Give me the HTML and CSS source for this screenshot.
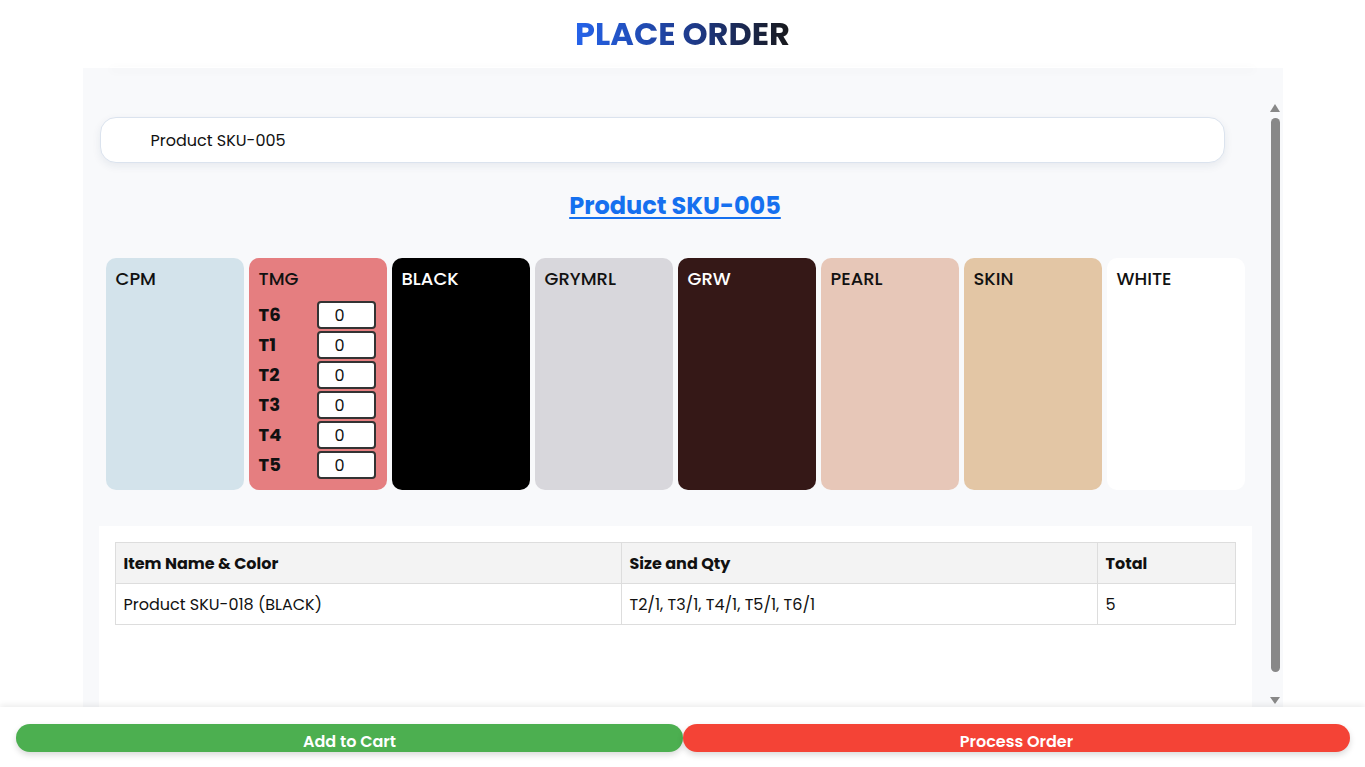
FILE: index.html
```html
<!DOCTYPE html>
<html lang="en">
<head>
  <meta charset="UTF-8">
  <meta name="viewport" content="width=device-width, initial-scale=1.0">
  <title>Place Order</title>
  <link rel="stylesheet" href="styles.css">
</head>
<body>
  <header class="page-header">
    <h1 class="page-title">PLACE ORDER</h1>
  </header>

  <main class="order-panel">
    <div class="order-scroll">
      <div class="search-box">
        <input class="search-input" type="text" value="Product SKU-005">
      </div>

      <div class="product-heading">
        <a href="#" class="product-link">Product SKU-005</a>
      </div>

      <div class="color-grid">
        <div class="color-card color-cpm">
          <div class="color-name">CPM</div>
        </div>

        <div class="color-card color-tmg">
          <div class="color-name">TMG</div>
          <div class="size-list">
            <label class="size-row"><span class="size-label">T6</span><input class="qty-input" type="text" value="0"></label>
            <label class="size-row"><span class="size-label">T1</span><input class="qty-input" type="text" value="0"></label>
            <label class="size-row"><span class="size-label">T2</span><input class="qty-input" type="text" value="0"></label>
            <label class="size-row"><span class="size-label">T3</span><input class="qty-input" type="text" value="0"></label>
            <label class="size-row"><span class="size-label">T4</span><input class="qty-input" type="text" value="0"></label>
            <label class="size-row"><span class="size-label">T5</span><input class="qty-input" type="text" value="0"></label>
          </div>
        </div>

        <div class="color-card color-black">
          <div class="color-name">BLACK</div>
        </div>
        <div class="color-card color-grymrl">
          <div class="color-name">GRYMRL</div>
        </div>
        <div class="color-card color-grw">
          <div class="color-name">GRW</div>
        </div>
        <div class="color-card color-pearl">
          <div class="color-name">PEARL</div>
        </div>
        <div class="color-card color-skin">
          <div class="color-name">SKIN</div>
        </div>
        <div class="color-card color-white">
          <div class="color-name">WHITE</div>
        </div>
      </div>

      <section class="cart-section">
        <table class="cart-table">
          <thead>
            <tr>
              <th class="col-name">Item Name &amp; Color</th>
              <th class="col-size">Size and Qty</th>
              <th class="col-total">Total</th>
            </tr>
          </thead>
          <tbody>
            <tr>
              <td>Product SKU-018 (BLACK)</td>
              <td>T2/1, T3/1, T4/1, T5/1, T6/1</td>
              <td>5</td>
            </tr>
          </tbody>
        </table>
      </section>
    </div>

    <div class="scroll-rail">
      <span class="rail-arrow rail-up"></span>
      <span class="rail-thumb"></span>
      <span class="rail-arrow rail-down"></span>
    </div>
  </main>

  <footer class="action-bar">
    <button class="btn btn-cart">Add to Cart</button>
    <button class="btn btn-process">Process Order</button>
  </footer>
</body>
</html>
```

FILE: styles.css
```css
:root {
  --panel-bg: #f8f9fb;
  --text-dark: #111111;
  --link-blue: #1570ef;
  --border: #dddddd;
  --green: #4caf50;
  --red: #f44336;
  --rail: #888888;
}

* {
  margin: 0;
  padding: 0;
  box-sizing: border-box;
}

body {
  font-family: Poppins, "Open Sans", "Noto Sans", sans-serif;
  color: var(--text-dark);
  background: #ffffff;
  height: 100vh;
  overflow: hidden;
}

.page-header {
  height: 68px;
  display: flex;
  align-items: center;
  justify-content: center;
  position: relative;
  z-index: 2;
}

.page-header::after {
  content: "";
  position: absolute;
  left: 110px;
  right: 110px;
  bottom: 0;
  height: 1px;
  box-shadow: 0 2px 8px rgba(0, 0, 0, 0.12);
}

.page-title {
  font-size: 32px;
  font-weight: 700;
  background: linear-gradient(90deg, #2563eb 0%, #1e3a8a 55%, #18181b 100%);
  -webkit-background-clip: text;
  background-clip: text;
  color: transparent;
}

.order-panel {
  width: 1200px;
  height: 639px;
  margin: 0 auto;
  background: var(--panel-bg);
  padding-top: 32px;
  display: flex;
}

.order-scroll {
  flex: 1;
  height: 100%;
  overflow: hidden;
  padding: 0 16px;
}

.scroll-rail {
  width: 15px;
  display: flex;
  flex-direction: column;
  align-items: center;
  padding: 4px 0 3px;
}

.rail-arrow {
  width: 0;
  height: 0;
  border-left: 5px solid transparent;
  border-right: 5px solid transparent;
}

.rail-up {
  border-bottom: 8px solid var(--rail);
}

.rail-down {
  margin-top: auto;
  border-top: 7px solid var(--rail);
}

.rail-thumb {
  width: 9px;
  height: 554px;
  margin-top: 6px;
  border-radius: 5px;
  background: var(--rail);
}

.search-box {
  padding-top: 17px;
  padding-left: 1px;
}

.search-input {
  width: 1125px;
  height: 46px;
  border: 1px solid #dbe3ee;
  border-radius: 16px;
  background: #ffffff;
  box-shadow: 0 3px 8px rgba(30, 50, 90, 0.08);
  padding-left: 50px;
  font-family: inherit;
  font-size: 16px;
  color: var(--text-dark);
  outline: none;
}

.product-heading {
  text-align: center;
  padding: 27px 0 36px;
}

.product-link {
  font-size: 24px;
  font-weight: 700;
  color: var(--link-blue);
  text-decoration: underline;
  text-underline-offset: 3px;
  line-height: 32px;
}

.color-grid {
  display: grid;
  grid-template-columns: repeat(8, 138px);
  gap: 5px;
  margin-left: 7px;
}

.color-card {
  height: 232px;
  border-radius: 10px;
  padding: 10px;
}

.color-name {
  font-size: 18px;
  font-weight: 500;
  line-height: 22px;
}

.color-cpm { background: #d3e3eb; }
.color-tmg { background: #e57e80; }
.color-black { background: #000000; color: #ffffff; }
.color-grymrl { background: #d8d7dc; }
.color-grw { background: #351817; color: #ffffff; }
.color-pearl { background: #e7c7b8; }
.color-skin { background: #e3c6a5; }
.color-white { background: #ffffff; }

.size-list {
  display: flex;
  flex-direction: column;
  gap: 2px;
  margin-top: 11px;
}

.size-row {
  display: grid;
  grid-template-columns: 58px 59px;
  align-items: center;
}

.size-label {
  font-size: 18px;
  font-weight: 700;
  line-height: 26px;
}

.qty-input {
  width: 59px;
  height: 28px;
  border: 2px solid #333333;
  border-radius: 4px;
  background: #ffffff;
  padding-left: 16px;
  font-family: inherit;
  font-size: 16px;
  color: var(--text-dark);
}

.cart-section {
  background: #ffffff;
  width: 1153px;
  margin-top: 36px;
  padding: 16px;
  min-height: 212px;
}

.cart-table {
  width: 1121px;
  border-collapse: collapse;
  font-size: 16px;
}

.cart-table th,
.cart-table td {
  border: 1px solid var(--border);
  text-align: left;
  padding: 0 8px;
  height: 41px;
}

.cart-table th {
  background: #f3f3f3;
  font-weight: 700;
}

.col-name { width: 506px; }
.col-size { width: 476px; }

.action-bar {
  position: relative;
  z-index: 2;
  height: 60px;
  background: #ffffff;
  box-shadow: 0 -2px 6px rgba(0, 0, 0, 0.08);
  display: flex;
  padding: 17px 15px 0 16px;
  align-items: flex-start;
}

.btn {
  flex: 1;
  height: 28px;
  border: none;
  border-radius: 14px;
  color: #ffffff;
  font-family: inherit;
  font-size: 16px;
  font-weight: 600;
  padding-top: 5px;
  box-shadow: 0 3px 6px rgba(0, 0, 0, 0.15);
  cursor: pointer;
}

.btn-cart {
  background: var(--green);
}

.btn-process {
  background: var(--red);
}
```
